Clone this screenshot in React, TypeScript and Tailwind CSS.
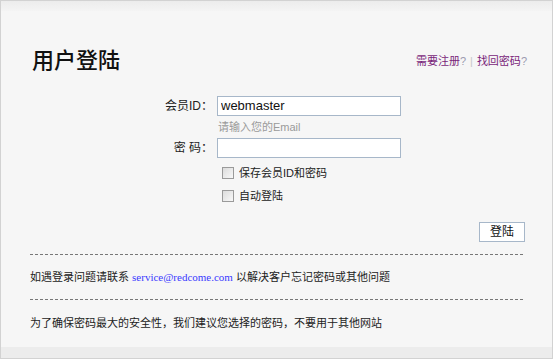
const FONT = { fontFamily: '"Liberation Sans", "Noto Sans CJK SC", sans-serif' }

function Checkbox({ label }: { label: string }) {
  return (
    <label className="flex items-center gap-[5px] h-[20px]">
      <span className="w-[12px] h-[12px] border border-[#9a9a9a] bg-gradient-to-br from-[#dcdcdc] to-[#f8f8f8]" />
      <span className="text-[11px] text-[#222]">{label}</span>
    </label>
  )
}

export default function App() {
  return (
    <div
      className="w-[553px] h-[359px] border border-[#d2d2d2] bg-[#f6f6f6] flex flex-col text-[#222]"
      style={FONT}
    >
      <div className="h-[10px] bg-gradient-to-b from-[#ececec] to-[#f4f4f4]" />

      <div className="flex items-center justify-between pl-[31px] pr-[25px] pt-[37px]">
        <h1 className="text-[22px] leading-[26px] text-[#111] font-medium">用户登陆</h1>
        <div className="text-[11px] text-[#7a1f7a] flex items-center gap-[4px]">
          <span>需要注册<span className="text-[#9b9bb0]">?</span></span>
          <span className="text-[#c8c8c8]">|</span>
          <span>找回密码<span className="text-[#9b9bb0]">?</span></span>
        </div>
      </div>

      <div className="flex flex-col mt-[22px]">
        <div className="flex items-center">
          <span className="w-[216px] pr-[4px] text-right text-[12px]">会员ID：</span>
          <input
            defaultValue="webmaster"
            className="w-[184px] h-[20px] border border-[#a7b7c9] bg-white px-[3px] text-[13px] text-[#111] outline-none"
          />
        </div>
        <div className="pl-[217px] text-[11px] text-[#9a9a9a] leading-[22px]">请输入您的Email</div>
        <div className="flex items-center">
          <span className="w-[216px] pr-[4px] text-right text-[12px]">密 码：</span>
          <input
            type="password"
            className="w-[184px] h-[20px] border border-[#a7b7c9] bg-white px-[3px] text-[13px] outline-none"
          />
        </div>
        <div className="pl-[221px] pt-[5px] flex flex-col gap-[3px]">
          <Checkbox label="保存会员ID和密码" />
          <Checkbox label="自动登陆" />
        </div>
      </div>

      <div className="flex justify-end pr-[27px] mt-[16px]">
        <button className="w-[46px] h-[20px] border border-[#a7b7c9] bg-white text-[12px] text-[#111]">登陆</button>
      </div>

      <div className="mx-[29px] mt-[12px] border-t border-dashed border-[#777]" />
      <div className="px-[29px] h-[45px] flex items-center text-[11px]">
        如遇登录问题请联系&nbsp;
        <span className="text-[#3a3aff]" style={{ fontFamily: '"Liberation Serif", serif' }}>service@redcome.com</span>
        &nbsp;以解决客户忘记密码或其他问题
      </div>
      <div className="mx-[29px] border-t border-dashed border-[#777]" />
      <div className="px-[29px] h-[48px] flex items-center text-[11px]">
        为了确保密码最大的安全性，我们建议您选择的密码，不要用于其他网站
      </div>

      <div className="mt-auto h-[11px] bg-[#ececec]" />
    </div>
  )
}
